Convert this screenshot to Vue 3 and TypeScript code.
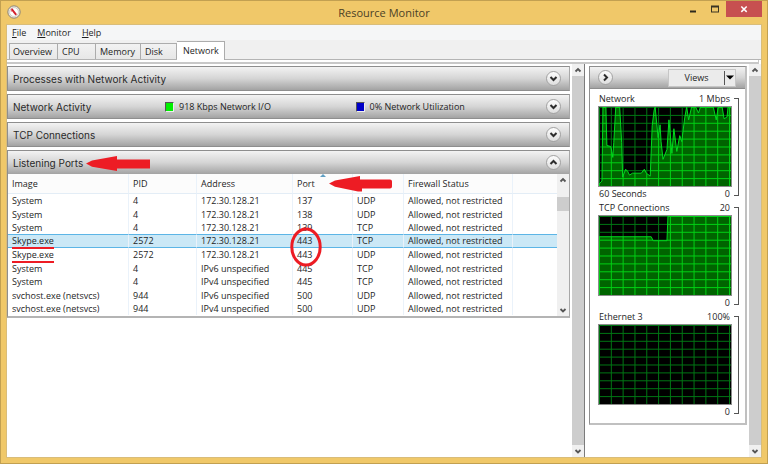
<script setup lang="ts">
import { computed, ref } from 'vue'

interface Port {
  image: string
  pid: number
  address: string
  port: number
  protocol: 'TCP' | 'UDP'
  flagged?: boolean
}

interface Section {
  id: string
  title: string
  legend?: { color: string; text: string }[]
}

interface Graph {
  id: string
  title: string
  max: string
  span: string
  points: [number, number][]
}

const menus = ['File', 'Monitor', 'Help']
const tabs = ['Overview', 'CPU', 'Memory', 'Disk', 'Network']
const activeTab = ref('Network')
const open = ref<string | null>('ports')
const selected = ref(3)

const sections: Section[] = [
  { id: 'processes', title: 'Processes with Network Activity' },
  {
    id: 'activity',
    title: 'Network Activity',
    legend: [
      { color: 'green', text: '918 Kbps Network I/O' },
      { color: 'blue', text: '0% Network Utilization' },
    ],
  },
  { id: 'tcp', title: 'TCP Connections' },
  { id: 'ports', title: 'Listening Ports' },
]

const ports: Port[] = [
  { image: 'System', pid: 4, address: '172.30.128.21', port: 137, protocol: 'UDP' },
  { image: 'System', pid: 4, address: '172.30.128.21', port: 138, protocol: 'UDP' },
  { image: 'System', pid: 4, address: '172.30.128.21', port: 139, protocol: 'TCP' },
  { image: 'Skype.exe', pid: 2572, address: '172.30.128.21', port: 443, protocol: 'TCP', flagged: true },
  { image: 'Skype.exe', pid: 2572, address: '172.30.128.21', port: 443, protocol: 'UDP', flagged: true },
  { image: 'System', pid: 4, address: 'IPv6 unspecified', port: 445, protocol: 'TCP' },
  { image: 'System', pid: 4, address: 'IPv4 unspecified', port: 445, protocol: 'TCP' },
  { image: 'svchost.exe (netsvcs)', pid: 944, address: 'IPv6 unspecified', port: 500, protocol: 'UDP' },
  { image: 'svchost.exe (netsvcs)', pid: 944, address: 'IPv4 unspecified', port: 500, protocol: 'UDP' },
]
const firstFlagged = computed(() => ports.findIndex((p) => p.flagged))

const graphs: Graph[] = [
  {
    id: 'network', title: 'Network', max: '1 Mbps', span: '60 Seconds',
    points: [
      [0, 78], [3, 75], [4, 0], [7, 0], [8, 39], [12, 40], [13, 45], [14, 51], [15, 36], [17, 0], [21, 0], [23, 36],
      [24, 71], [27, 63], [29, 65], [31, 69], [34, 67], [43, 67], [46, 63], [48, 67], [52, 70], [54, 19], [56, 3],
      [57, 0], [60, 31], [62, 18], [63, 35], [65, 53], [69, 43], [71, 13], [74, 47], [76, 22], [79, 45], [82, 29],
      [84, 35], [87, 11], [89, 0], [91, 13], [94, 0], [98, 0], [101, 6], [103, 0], [116, 0], [119, 13], [121, 0],
      [125, 0], [127, 12], [130, 10], [131, 0], [134, 0],
    ],
  },
  {
    id: 'connections', title: 'TCP Connections', max: '20', span: '',
    points: [[0, 21], [53, 21], [55, 25], [69, 25], [70, 0], [134, 0]],
  },
  { id: 'ethernet', title: 'Ethernet 3', max: '100%', span: '', points: [] },
]

const columns = Array.from({ length: 12 }, (_, i) => i * 12)
const lines = Array.from({ length: 10 }, (_, i) => i * 8)
const gridPath = columns.map((x) => `M${x} 0V80`).join('') + lines.map((y) => `M0 ${y}H134`).join('')

const line = (g: Graph) => g.points.map((p) => p.join(',')).join(' ')
const area = (g: Graph) => (g.points.length ? `0,80 ${line(g)} 134,80` : '')
const toggle = (id: string) => {
  open.value = open.value === id ? null : id
}
</script>

<template>
  <div class="window">
    <header class="titlebar">
      <svg class="app-icon" viewBox="0 0 14 14" aria-hidden="true">
        <circle cx="7" cy="7" r="6.2" fill="#e9e6e1" stroke="#8f8570" />
        <circle cx="7" cy="7" r="4.4" fill="#fff" stroke="#c9c4bb" stroke-width=".7" />
        <path d="M4.6 3.8 9.2 9.8" stroke="#d3202c" stroke-width="1.9" />
        <path d="M4.3 3.6v3" stroke="#e0565e" stroke-width="1" />
      </svg>
      <h1>Resource Monitor</h1>
      <div class="caption">
        <button type="button" aria-label="Minimize">
          <svg viewBox="0 0 8 8"><path d="M1 5.5h6v2H1z" fill="#2e2a1e" /></svg>
        </button>
        <button type="button" aria-label="Maximize">
          <svg viewBox="0 0 8 8"><path d="M0 .5h8v7H0zM1 2.5v4h6v-4z" fill="#3b3525" fill-rule="evenodd" /></svg>
        </button>
        <button type="button" class="close" aria-label="Close">
          <svg viewBox="0 0 8 8"><path d="M1.3 1.5l5.4 5.4M6.7 1.5 1.3 6.9" stroke="#fff" stroke-width="1.5" /></svg>
        </button>
      </div>
    </header>

    <div class="client">
      <nav class="menubar">
        <button v-for="m in menus" :key="m" type="button"><u>{{ m[0] }}</u>{{ m.slice(1) }}</button>
      </nav>
      <div class="tabs" role="tablist">
        <button
          v-for="t in tabs"
          :key="t"
          type="button"
          role="tab"
          :class="['tab', t.toLowerCase()]"
          :aria-selected="activeTab === t"
          @click="activeTab = t"
        >
          {{ t }}
        </button>
      </div>
      <div class="tab-edge"></div>

      <div class="body">
        <main class="sections">
          <section v-for="s in sections" :key="s.id" class="section">
            <div class="bar">
              <h2>
                {{ s.title }}
                <svg v-if="s.id === 'ports'" class="arrow title-arrow" viewBox="0 0 64 16" aria-hidden="true">
                  <path d="M0 7.6 6 4.6 31 0v3.6h33v9H31V15L6 10.8z" />
                </svg>
              </h2>
              <p v-for="l in s.legend" :key="l.text" class="legend">
                <i :class="['swatch', l.color]"></i>{{ l.text }}
              </p>
              <button
                type="button"
                class="round"
                :aria-label="`Toggle ${s.title}`"
                :aria-expanded="open === s.id"
                @click="toggle(s.id)"
              >
                <svg viewBox="0 0 15 15">
                  <path :d="open === s.id ? 'M4.5 9l3-3 3 3' : 'M4.5 6l3 3 3-3'" />
                </svg>
              </button>
            </div>

            <div v-if="s.id === 'ports' && open === 'ports'" class="list">
              <div class="rows">
                <table>
                  <colgroup>
                    <col class="c-image" /><col class="c-pid" /><col class="c-address" />
                    <col class="c-port" /><col class="c-protocol" /><col class="c-status" /><col />
                  </colgroup>
                  <thead>
                    <tr>
                      <th>Image</th>
                      <th>PID</th>
                      <th>Address</th>
                      <th aria-sort="ascending">
                        Port
                        <svg class="sort" viewBox="0 0 6 3" aria-hidden="true"><path d="M0 3 3 0l3 3z" /></svg>
                        <svg class="arrow port-arrow" viewBox="0 0 64 16" aria-hidden="true">
                          <path d="M0 7.6 6 4.6 31 0v3.6h30q2 0 2 2v5q0 2-2 2H33V15.6H29L6 10.8z" />
                        </svg>
                      </th>
                      <th></th>
                      <th>Firewall Status</th>
                      <th></th>
                    </tr>
                  </thead>
                  <tbody>
                    <tr v-for="(p, i) in ports" :key="i" :class="{ selected: i === selected }" @click="selected = i">
                      <td><span :class="{ flagged: p.flagged }">{{ p.image }}</span></td>
                      <td>{{ p.pid }}</td>
                      <td>{{ p.address }}</td>
                      <td>
                        {{ p.port }}
                        <svg v-if="i === firstFlagged" class="ring" viewBox="0 0 32 40" aria-hidden="true">
                          <ellipse cx="16" cy="20" rx="14.2" ry="18" />
                        </svg>
                      </td>
                      <td>{{ p.protocol }}</td>
                      <td>Allowed, not restricted</td>
                      <td></td>
                    </tr>
                  </tbody>
                </table>
              </div>
              <div class="scroll list-scroll">
                <button type="button" aria-label="Scroll list up">
                  <svg viewBox="0 0 12 12"><path d="M3.5 7.5 6 5l2.5 2.5" /></svg>
                </button>
                <div class="track"><div class="thumb"></div></div>
                <button type="button" aria-label="Scroll list down">
                  <svg viewBox="0 0 12 12"><path d="M3.5 5 6 7.5 8.5 5" /></svg>
                </button>
              </div>
            </div>
          </section>
        </main>

        <div class="scroll full">
          <button type="button" aria-label="Scroll sections up">
            <svg viewBox="0 0 12 12"><path d="M3.5 7.5 6 5l2.5 2.5" /></svg>
          </button>
          <div class="track"><div class="thumb"></div></div>
          <button type="button" aria-label="Scroll sections down">
            <svg viewBox="0 0 12 12"><path d="M3.5 5 6 7.5 8.5 5" /></svg>
          </button>
        </div>

        <aside class="side">
          <div class="panel">
            <div class="bar side-bar">
              <button type="button" class="round" aria-label="Hide graphs">
                <svg viewBox="0 0 15 15"><path d="M6 4.5l3 3-3 3" /></svg>
              </button>
              <div class="views">
                <button type="button" class="views-main">Views</button>
                <button type="button" class="views-drop" aria-label="Choose view size">
                  <svg viewBox="0 0 8 5"><path d="M0 .5h8l-4 4z" /></svg>
                </button>
              </div>
            </div>
            <div class="graphs">
              <figure v-for="g in graphs" :key="g.id" class="graph">
                <figcaption><span>{{ g.title }}</span><span>{{ g.max }}</span></figcaption>
                <svg class="plot" viewBox="0 0 134 80" preserveAspectRatio="none" aria-hidden="true">
                  <clipPath :id="`area-${g.id}`"><polygon :points="area(g)" /></clipPath>
                  <path class="grid dim" :d="gridPath" />
                  <template v-if="g.points.length">
                    <polygon class="area" :points="area(g)" />
                    <g :clip-path="`url(#area-${g.id})`"><path class="grid bright" :d="gridPath" /></g>
                    <polyline class="trace" :points="line(g)" />
                  </template>
                </svg>
                <div class="scale"><span>{{ g.span }}</span><span>0</span></div>
                <div class="bracket"></div>
              </figure>
            </div>
          </div>
        </aside>

        <div class="scroll full">
          <button type="button" aria-label="Scroll graphs up">
            <svg viewBox="0 0 12 12"><path d="M3.5 7.5 6 5l2.5 2.5" /></svg>
          </button>
          <div class="track"><div class="thumb"></div></div>
          <button type="button" aria-label="Scroll graphs down">
            <svg viewBox="0 0 12 12"><path d="M3.5 5 6 7.5 8.5 5" /></svg>
          </button>
        </div>
      </div>
    </div>
  </div>
</template>

<style>
body {
  margin: 0;
}
</style>

<style scoped>
* {
  box-sizing: border-box;
}

.window {
  display: flex;
  flex-direction: column;
  min-height: 100vh;
  padding: 0 5px 5px;
  border: 1px solid #c2a051;
  background: #f0c869;
  color: #1e1e1e;
  font: 9px/14px 'Open Sans', 'Noto Sans', sans-serif;
}

button {
  padding: 0;
  border: 0;
  background: none;
  color: inherit;
  font: inherit;
}

h1,
h2,
p,
figure {
  margin: 0;
}

svg {
  display: block;
}

/* Title bar */
.titlebar {
  display: grid;
  grid-template-columns: 1fr auto 1fr;
  height: 23px;
}

.app-icon {
  width: 14px;
  height: 14px;
  margin: 4px 0 0 1px;
}

h1 {
  color: #4b4126;
  font-size: 11px;
  font-weight: 400;
  line-height: 23px;
}

.caption {
  display: flex;
  justify-content: flex-end;
}

.caption button {
  display: grid;
  place-items: center;
  width: 22px;
  height: 16px;
}

.caption svg {
  width: 8px;
  height: 8px;
}

.caption .close {
  width: 36px;
  background: #c75050;
}

/* Client area */
.client {
  display: flex;
  flex: 1;
  flex-direction: column;
  border: 1px solid #d9bd7a;
  background: #fff;
}

.menubar {
  display: flex;
  gap: 11px;
  height: 15px;
  padding-left: 5px;
  background: #f5f6f7;
}

.menubar button {
  line-height: 15px;
}

.tabs {
  display: flex;
  align-items: flex-end;
  height: 20px;
  padding: 2px 2px 0;
  border-bottom: 1px solid #b4b4b4;
  background: #f0f0f0;
}

.tab {
  height: 16px;
  padding: 0 4px;
  border: 1px solid #acacac;
  border-bottom: 0;
  background: linear-gradient(#f2f2f2, #e7e7e7);
  line-height: 16px;
  text-align: left;
}

.tab + .tab {
  border-left: 0;
}

.tab.overview {
  width: 49px;
  padding-left: 3px;
}

.tab.cpu {
  width: 38px;
}

.tab.memory {
  width: 45px;
}

.tab.disk {
  width: 36px;
}

.tab.network {
  width: 48px;
  padding-left: 6px;
}

.tab[aria-selected='true'] {
  height: 19px;
  margin-bottom: -1px;
  background: #fff;
}

.tab-edge {
  height: 4px;
  margin-right: 2px;
  border: 1px solid #c8c8c8;
  border-width: 0 1px 2px 0;
}

.body {
  display: flex;
  flex: 1;
}

.sections {
  display: flex;
  flex: 1;
  flex-direction: column;
  gap: 3px;
  min-width: 0;
  padding: 2px 2px 0 0;
}

.section {
  border: 1px solid #8e8e8e;
  border-right-color: #a8a8a8;
}

.section:last-child {
  border-bottom: 2px solid #b4b4b4;
}

.bar {
  display: flex;
  align-items: center;
  height: 22px;
  padding: 0 8px 0 5px;
  background: linear-gradient(#f3f3f3, #d5d5d5 50%, #a3a3a3);
}

.sections .bar {
  height: 23px;
}

h2 {
  position: relative;
  width: 154px;
  color: #2a2a2a;
  font: 400 10px/22px Inter, 'Liberation Sans', sans-serif;
  white-space: nowrap;
}

.legend {
  display: flex;
  align-items: center;
  gap: 5px;
  width: 193px;
  white-space: nowrap;
}

.swatch {
  width: 9px;
  height: 10px;
  border: 1px solid #555;
  border-right-color: #eee;
  border-bottom-color: #eee;
}

.swatch.green {
  background: #00f000;
}

.swatch.blue {
  background: #0000c8;
}

.round {
  width: 15px;
  height: 15px;
  margin-left: auto;
  border: 1px solid #a2a2a2;
  border-radius: 50%;
  background: linear-gradient(#fdfdfd, #dedede);
}

.round svg {
  width: 15px;
  height: 15px;
  margin: -1px;
}

.round path {
  fill: none;
  stroke: #2d2d2d;
  stroke-width: 2;
}

/* Listening ports list */
.list {
  display: flex;
  background: #fff;
}

.rows {
  flex: 1;
  min-width: 0;
  padding-bottom: 1px;
}

table {
  width: 100%;
  table-layout: fixed;
  border-spacing: 0;
}

.c-image {
  width: 121px;
}

.c-pid {
  width: 68px;
}

.c-address {
  width: 96px;
}

.c-port {
  width: 60px;
}

.c-protocol {
  width: 51px;
}

.c-status {
  width: 109px;
}

th,
td {
  position: relative;
  height: 13px;
  padding: 0 0 0 4px;
  border-right: 1px solid #eaf2fa;
  font-weight: 400;
  line-height: 13px;
  text-align: left;
  white-space: nowrap;
}

th {
  height: 20px;
  border-bottom: 1px solid #e3edf6;
  background: #fcfcfc;
}

th:last-child,
td:last-child {
  border-right: 0;
}

tbody tr:nth-child(even) td {
  height: 14px;
}

.selected td {
  border-top: 1px solid #5cb5e6;
  border-bottom: 1px solid #5cb5e6;
  background: #cbe8f6;
  line-height: 12px;
}

.flagged {
  position: relative;
}

.flagged::after {
  content: '';
  position: absolute;
  z-index: 1;
  right: 0;
  bottom: -2px;
  left: 0;
  height: 2px;
  background: #ed1c24;
}

.sort {
  position: absolute;
  top: 0;
  left: 27px;
  width: 6px;
  height: 3px;
  fill: #5f9fc4;
}

.arrow {
  position: absolute;
  z-index: 1;
  width: 64px;
  height: 16px;
  fill: #ed1c24;
}

.title-arrow {
  top: 4px;
  left: 73px;
}

.port-arrow {
  top: 2px;
  left: 36px;
}

.ring {
  position: absolute;
  z-index: 2;
  top: -8px;
  left: -3px;
  width: 32px;
  height: 40px;
  fill: none;
  stroke: #ed1c24;
  stroke-width: 3;
  pointer-events: none;
}

/* Scroll bars */
.scroll {
  display: flex;
  flex-direction: column;
  width: 12px;
  background: #f0f0f0;
}

.scroll button {
  height: 12px;
}

.scroll svg {
  width: 12px;
  height: 12px;
}

.scroll path {
  fill: none;
  stroke: #555;
  stroke-width: 1.8;
}

.track {
  flex: 1;
}

.thumb {
  height: 100%;
  background: #cdcdcd;
}

.list-scroll .track {
  padding-top: 11px;
}

.list-scroll .thumb {
  height: 14px;
}

/* Graph pane */
.side {
  width: 165px;
  padding: 2px 2px 0 4px;
  border-left: 1px solid #7b7b7b;
}

.panel {
  border: 1px solid #8e8e8e;
  border-right: 2px solid #c0c0c0;
  border-bottom: 2px solid #c0c0c0;
}

.side-bar {
  border-bottom: 1px solid #8e8e8e;
  padding: 0 9px 0 8px;
}

.side-bar .round {
  margin: 0 auto 0 0;
}

.views {
  display: flex;
  width: 68px;
  height: 18px;
  border: 1px solid #c6c6c6;
  background: #ebebeb;
}

.views-main {
  flex: 1;
  line-height: 16px;
}

.views-drop {
  width: 11px;
  margin: 1px 0;
  border-left: 1px solid #555;
}

.views-drop svg {
  width: 8px;
  height: 5px;
  margin: 0 auto;
}

.graphs {
  padding: 3px 6px 4px 8px;
}

.graph {
  display: grid;
  grid-template-columns: 1fr 7px;
}

figcaption,
.scale {
  display: flex;
  grid-column: 1;
  justify-content: space-between;
  height: 14px;
  padding: 0 2px 0 1px;
  white-space: nowrap;
}

.plot {
  grid-column: 1;
  width: 100%;
  height: 81px;
  border: 1px solid #8c8c8c;
  background: #000;
}

.bracket {
  grid-row: 1 / 4;
  grid-column: 2;
  width: 5px;
  margin: 6px 0 5px 2px;
  border: 1px solid #555;
  border-left: 0;
}

.grid {
  fill: none;
  stroke-width: 1;
  transform: translate(0.5px, 0.5px);
}

.dim {
  stroke: #007814;
}

.bright {
  stroke: #00d214;
}

.area {
  fill: #006400;
}

.trace {
  fill: none;
  stroke: #00dc1e;
  stroke-width: 1;
}
</style>
